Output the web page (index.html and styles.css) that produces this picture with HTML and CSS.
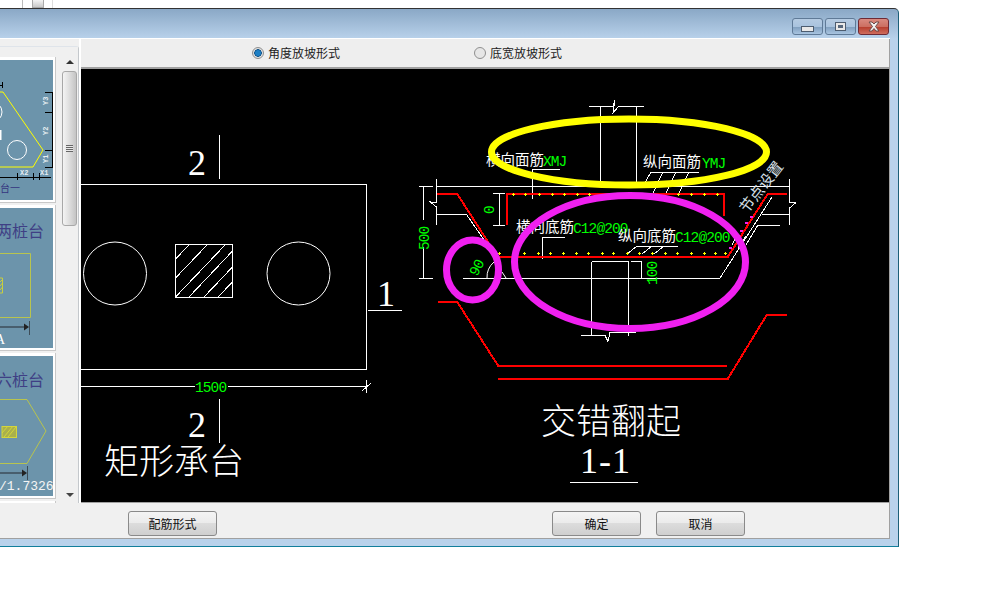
FILE: index.html
```html
<!DOCTYPE html>
<html lang="en">
<head>
  <meta charset="UTF-8" />
  <title>承台配筋</title>
  <link rel="stylesheet" href="styles.css">
</head>
<body>
  <div class="strip">
    <span class="strip-cell"><span class="strip-knob"></span></span>
  </div>

  <div class="window">
    <div class="titlebar">
      <button class="ctl"><span class="ctl-min"></span></button>
      <button class="ctl"><span class="ctl-max"></span></button>
      <button class="ctl ctl-close">
        <svg width="16" height="11" viewBox="0 0 16 11"><path d="M3 1h3l2 2 2-2h3l-3.500 4.500 3.500 4.500h-3l-2-2.500-2 2.500h-3l3.500-4.500z" fill="#f2f2f2" stroke="#6b4a4a" stroke-width="1"/></svg>
      </button>
    </div>

    <div class="upper">
      <div class="side">
        <div class="side-panel">
          <div class="thumbs">
            <div class="card">
              <svg class="thumb" viewBox="0 60 53 140">
                <polyline points="-2,92 3,92 43,150 33,167 -2,167" fill="none" stroke="#ffff00"/>
                <circle cx="17" cy="150" r="9.500" fill="none" stroke="#fff"/>
                <circle cx="-8" cy="112" r="10" fill="none" stroke="#fff"/>
                <rect x="0" y="130" width="1.500" height="10" fill="#fff"/>
                <path d="M45 92.500h7.500M45 112.500h7.500M45 150.500h7.500M45 167.500h7.500M52.500 92v76M0 177.500h51M17.500 173v7M33.500 173v7M39.500 173v7M-2 85.500h4M2.500 82v6" stroke="#000" fill="none"/>
                <text class="tiny" transform="translate(48 105) rotate(-90)">Y3</text>
                <text class="tiny" transform="translate(48 135) rotate(-90)">Y2</text>
                <text class="tiny" transform="translate(48 163) rotate(-90)">Y1</text>
                <text class="tiny" x="20" y="175">X2</text>
                <text class="tiny" x="40" y="175">X1</text>
                <text class="thumb-cap" x="0" y="192">台一</text>
              </svg>
            </div>
            <div class="card">
              <svg class="thumb" viewBox="0 208 53 140">
                <text class="thumb-title" x="44" y="237">两桩台</text>
                <polyline points="-2,253.500 30.500,253.500 30.500,317.500 -2,317.500" fill="none" stroke="#b8c44e"/>
                <path d="M0 278h2.500v15h-2.500M0 282l2-2M0 286l2.500-3M0 290l2.500-3" fill="none" stroke="#c8cf3e"/>
                <path d="M0 327h25" stroke="#3d4d58" stroke-width="1.500"/>
                <path d="M24 323.500l5 3.500-5 3.500z" fill="#222"/>
                <path d="M29.500 321v14" stroke="#3d4d58"/>
                <text class="thumb-a" x="-5" y="344">A</text>
              </svg>
            </div>
            <div class="card">
              <svg class="thumb" viewBox="0 356 53 140">
                <text class="thumb-title" x="44" y="386">六桩台</text>
                <polyline points="-2,399.500 27,399.500 46,431 27,463.500 -2,463.500" fill="none" stroke="#b8c44e"/>
                <rect x="2" y="426.500" width="14.500" height="11" fill="#a9b04c" stroke="#d4d63a"/>
                <path d="M4 437l9-11M8 437l8-10M2 433l6-7" stroke="#d4d63a" fill="none"/>
                <path d="M0 473h23" stroke="#3d4d58" stroke-width="1.500"/>
                <path d="M22 469.500l5 3.500-5 3.500z" fill="#222"/>
                <path d="M27.500 466v14" stroke="#3d4d58"/>
                <text class="thumb-num" x="-1" y="490">/1.7326</text>
              </svg>
            </div>
            <div class="card"></div>
          </div>
          <div class="scrollbar">
            <span class="arrow-up"></span>
            <span class="scroll-thumb"><span class="grip"></span></span>
            <span class="scroll-track"></span>
            <span class="arrow-down"></span>
          </div>
        </div>
      </div>

      <div class="main">
        <div class="modes">
          <label class="mode"><span class="radio radio-on"></span>角度放坡形式</label>
          <label class="mode"><span class="radio"></span>底宽放坡形式</label>
        </div>
        <svg class="canvas" viewBox="81 69 808 433">
          <!-- plan view -->
          <g class="wire">
            <path d="M81 184.500H366.500V369.500H81"/>
            <path d="M219.500 135v44M219.500 399v44M368 310.500h34M81 386.500h114M228 386.500h138M366.500 380v13M362 391l9-8"/>
            <rect x="175.500" y="244.500" width="57" height="53"/>
            <path d="M175.500 259l14-14.500M175.500 278l32-33.500M175.500 297l50-52.500M189 297l43.500-46M204 297l28.500-30M218 297l14.500-15"/>
          </g>
          <g class="round">
            <circle cx="115" cy="273.500" r="31.500"/>
            <circle cx="298.500" cy="273.500" r="31.500"/>
            <path d="M487 278a20 20 0 0 1 7-16M502 272l4 6"/>
          </g>

          <!-- section -->
          <g class="wire">
            <path d="M600.500 106v80M636.500 106v80M589 106h24l2-6 -2 13 6-7h25"/>
            <path d="M436 186.500H790M436.500 179v24l-6 -1 6 5v18M436.500 214.500h30l20 29"/>
            <path d="M789.500 179v23l6 1 -6 5v17M762 214.500h28M758 225.500h22M772 197l-32 50M758 225l-12 20M720 278l20-31"/>
            <path d="M463 278.500H720M591.500 261.500v74M628.500 261.500v74M591.500 261.500h37M581 335.500h24l3 6 2-9h26"/>
            <path d="M423.500 186v34M423.500 247v31M419 186.500h14M419 278.500h14M499.500 193v32M493 193.500h12M493 225.500h12M641.500 261v17M631 261.500h10M631 278.500h10"/>
            <path d="M532.500 199v-30h27M542.500 259v-22h22M699 172h-48l-8 14M663 172l-10 21M676 172l-10 21M689 172l-10 21"/>
            <path d="M678 246h-41l-10 8M664 246l-10 8M652 246l-10 8M737 236l-5 9M746 236l-8 12"/>
          </g>
          <g class="rebar">
            <polyline points="437,193.500 457,193.500 488,242 497,256.500 728,256.500 768,193.500 787,193.500"/>
            <polyline points="506.500,225 506.500,193.500 723.500,193.500 723.500,216"/>
            <polyline points="438,301.500 457,301.500 498,365.500 727,365.500"/>
            <polyline points="498,378.500 728,378.500 767,314.500 787,314.500"/>
          </g>
          <path class="dots" d="M512 194.500h3m-1.500-1.500v3M524 194.500h3m-1.500-1.500v3M538 194.500h3m-1.500-1.500v3M551 194.500h3m-1.500-1.500v3M563 194.500h3m-1.500-1.500v3M576 194.500h3m-1.500-1.500v3M588 194.500h3m-1.500-1.500v3M677 194.500h3m-1.500-1.500v3M690 194.500h3m-1.500-1.500v3M703 194.500h3m-1.500-1.500v3M716 194.500h3m-1.500-1.500v3M498 253.500h3m-1.500-1.500v3M523 253.500h3m-1.500-1.500v3M537 253.500h3m-1.500-1.500v3M549 253.500h3m-1.500-1.500v3M562 253.500h3m-1.500-1.500v3M575 253.500h3m-1.500-1.500v3M587 253.500h3m-1.500-1.500v3M601 253.500h3m-1.500-1.500v3M612 253.500h3m-1.500-1.500v3M626 253.500h3m-1.500-1.500v3M638 253.500h3m-1.500-1.500v3M651 253.500h3m-1.500-1.500v3M664 253.500h3m-1.500-1.500v3M676 253.500h3m-1.500-1.500v3M690 253.500h3m-1.500-1.500v3M703 253.500h3m-1.500-1.500v3M714 253.500h3m-1.500-1.500v3M724 253.500h3m-1.500-1.500v3"/>
          <path class="pink-dots" d="M750 217h3M745 223h3M740 231h3M729 248h3"/>

          <!-- drawing text -->
          <text class="big-num" x="188" y="175">2</text>
          <text class="big-num" x="188" y="437">2</text>
          <text class="big-num" x="377" y="306">1</text>
          <text class="big-cjk" x="104" y="474">矩形承台</text>
          <text class="big-cjk" x="541" y="434">交错翻起</text>
          <text class="big-num big-num-wide" x="580" y="473">1-1</text>
          <path class="wire" d="M570 482.500h68"/>

          <text class="dim" x="195" y="392">1500</text>
          <text class="dim" transform="translate(429 250) rotate(-90)">500</text>
          <text class="dim" transform="translate(494 214) rotate(-90)">0</text>
          <text class="dim" transform="translate(657 285) rotate(-90)">100</text>
          <text class="dim" transform="translate(477 277) rotate(-62)">90</text>

          <text class="note" x="486" y="165">横向面筋</text>
          <text class="dim" x="543" y="166">XMJ</text>
          <text class="note" x="643" y="167">纵向面筋</text>
          <text class="dim" x="702" y="168">YMJ</text>
          <text class="note" x="516" y="232">横向底筋</text>
          <text class="dim" x="573" y="233">C12@200</text>
          <text class="note" x="618" y="241">纵向底筋</text>
          <text class="dim" x="675" y="242">C12@200</text>
          <text class="note note-pale" transform="translate(747 214) rotate(-52)">节点设置</text>

          <!-- marker ellipses -->
          <ellipse class="mark-yellow" cx="629" cy="152" rx="137.500" ry="33"/>
          <ellipse class="mark-pink" cx="630" cy="262" rx="115.500" ry="66.500"/>
          <ellipse class="mark-pink" cx="472.500" cy="270" rx="26" ry="30"/>
        </svg>
      </div>
    </div>

    <div class="footer">
      <button class="btn btn-form">配筋形式</button>
      <button class="btn">确定</button>
      <button class="btn">取消</button>
    </div>
  </div>
</body>
</html>
```

FILE: styles.css
```css
html, body {
  margin: 0;
  height: 100%;
  background: #fff;
  overflow: hidden;
}
body {
  font-family: "Noto Sans CJK SC", "Liberation Sans", sans-serif;
  font-size: 12px;
  color: #111;
}

.strip {
  height: 8px;
  padding-left: 22px;
}
.strip-cell {
  display: block;
  width: 31px;
  height: 8px;
  box-sizing: border-box;
  border-left: 1px solid #bbb;
  border-right: 1px solid #ddd;
  padding-left: 9px;
}
.strip-knob {
  display: block;
  width: 12px;
  height: 8px;
  box-sizing: border-box;
  background: linear-gradient(#f4f4f4, #c9c9c9);
  border: 1px solid #aaa;
  border-top: 0;
}

.window {
  width: 899px;
  height: 539px;
  box-sizing: border-box;
  padding-right: 8px;
  background: linear-gradient(#8aa8c6, #b9d2eb 30px);
  border-top: 1px solid #333;
  border-right: 1px solid #1c5f78;
  border-bottom: 1px solid #127f9b;
  border-top-right-radius: 5px;
  display: flex;
  flex-direction: column;
}

.titlebar {
  height: 29px;
  box-sizing: border-box;
  padding: 9px 1px 0 0;
  display: flex;
  justify-content: flex-end;
  gap: 2px;
}
.ctl {
  width: 31px;
  height: 17px;
  padding: 0;
  border: 1px solid #5f7a97;
  border-radius: 3px;
  background: linear-gradient(#b5cbe2, #a9c3de 50%, #7f9ebe 52%, #a8c4e0);
  display: flex;
  align-items: center;
  justify-content: center;
}
.ctl-min {
  width: 11px;
  height: 4px;
  margin-top: 5px;
  background: #e8e8e8;
  border: 1px solid #4d5d70;
}
.ctl-max {
  width: 9px;
  height: 7px;
  background: #e8e8e8;
  border: 1px solid #4d5d70;
  box-shadow: inset 0 0 0 2px #e8e8e8, inset 0 0 0 6px #56677c;
}
.ctl-close {
  border-color: #6e2a35;
  background: linear-gradient(#d98a80, #cc6f62 50%, #b63c2c 52%, #cf6d5e);
}

.upper {
  display: flex;
  height: 465px;
  border-top: 1px solid #fff;
  box-sizing: border-box;
}
.side {
  width: 81px;
  flex: none;
  box-sizing: border-box;
  background: #f0f0f0;
  border-right: 2px solid #fff;
  padding-top: 7px;
  overflow: hidden;
}
.side-panel {
  height: 100%;
  box-sizing: content-box;
  display: flex;
  border-top: 1px solid #dfe4ea;
  border-right: 1px solid #c4c8cc;
  border-top-right-radius: 3px;
}
.thumbs {
  width: 56px;
  flex: none;
  padding-top: 10px;
  overflow: hidden;
}
.card {
  height: 140px;
  width: 53px;
  padding: 3px 2px 2px 0;
  margin-bottom: 2px;
  background: #fff;
  border-right: 1px solid #c8c8c8;
  border-bottom: 1px solid #c8c8c8;
}
.thumb {
  display: block;
  width: 53px;
  height: 140px;
  background: #6c94ab;
}

.tiny {
  font-family: "Liberation Mono", monospace;
  font-size: 7px;
  font-weight: bold;
  fill: #e6eef2;
}
.thumb-cap {
  font-size: 10px;
  fill: #35357f;
}
.thumb-title {
  font-size: 16px;
  fill: #3f3f85;
  text-anchor: end;
}
.thumb-a {
  font-family: "Liberation Serif", serif;
  font-size: 14px;
  fill: #fff;
}
.thumb-num {
  font-family: "Liberation Mono", monospace;
  font-size: 13px;
  fill: #f4f4f4;
}

.scrollbar {
  width: 17px;
  margin-left: 5px;
  flex: none;
  display: flex;
  flex-direction: column;
  align-items: center;
  padding: 13px 0 7px;
  box-sizing: border-box;
  background: #f0f0f0;
}
.arrow-up {
  width: 0;
  height: 0;
  border: 4px solid transparent;
  border-top: 0;
  border-bottom: 4px solid #333;
  margin-bottom: 7px;
}
.arrow-down {
  width: 0;
  height: 0;
  border: 4px solid transparent;
  border-bottom: 0;
  border-top: 4px solid #444;
}
.scroll-thumb {
  width: 15px;
  height: 155px;
  box-sizing: border-box;
  border: 1px solid #a8a8a8;
  border-radius: 3px;
  background: linear-gradient(90deg, #f4f4f4, #e2e2e2 40%, #c4c4c4);
  display: flex;
  align-items: center;
  justify-content: center;
}
.grip {
  width: 7px;
  height: 7px;
  background: repeating-linear-gradient(#666 0 1px, #e8e8e8 1px 2px);
}
.scroll-track {
  flex: 1;
}

.main {
  width: 809px;
  flex: none;
  box-sizing: border-box;
  display: flex;
  flex-direction: column;
  border-right: 1px solid #a0a0a0;
  border-bottom: 1px solid #a0a0a0;
}
.modes {
  height: 30px;
  flex: none;
  box-sizing: border-box;
  background: #eee;
  border-bottom: 2px solid #a0a0a0;
  padding-left: 171px;
  display: flex;
  align-items: center;
}
.mode {
  display: flex;
  align-items: center;
  gap: 4px;
  line-height: 14px;
  width: 222px;
  color: #222;
}
.radio {
  width: 10px;
  height: 10px;
  flex: none;
  border-radius: 50%;
  border: 1px solid #8f8f8f;
  background: #e6e6e6;
}
.radio-on {
  background: radial-gradient(circle, #1d7fc4 0 2.500px, #0b4f86 3.500px, #e0e0e0 4px);
}

.canvas {
  display: block;
  width: 808px;
  height: 433px;
  flex: none;
  background: #000;
}
.wire {
  fill: none;
  stroke: #fff;
  shape-rendering: crispEdges;
}
.round {
  fill: none;
  stroke: #fff;
}
.rebar {
  fill: none;
  stroke: #f00;
  stroke-width: 2;
  shape-rendering: crispEdges;
}
.dots {
  fill: none;
  stroke: #ff0;
  shape-rendering: crispEdges;
}
.pink-dots {
  stroke: #f020f0;
  stroke-width: 2;
  shape-rendering: crispEdges;
}

.big-num {
  font-family: "Liberation Serif", serif;
  font-size: 36px;
  fill: #fff;
}
.big-num-wide {
  letter-spacing: 1px;
}
.big-cjk {
  font-size: 35px;
  font-weight: 300;
  fill: #fff;
}
.dim {
  font-family: "Liberation Mono", monospace;
  font-size: 14.500px;
  letter-spacing: -0.900px;
  fill: #00ff00;
}
.note {
  font-size: 14.500px;
  fill: #fff;
}
.note-pale {
  font-size: 15px;
  fill: #d8e0ea;
}
.mark-yellow {
  fill: none;
  stroke: #ffff00;
  stroke-width: 7;
}
.mark-pink {
  fill: none;
  stroke: #f020f0;
  stroke-width: 7;
}

.footer {
  height: 36px;
  flex: none;
  box-sizing: border-box;
  background: #f0f0f0;
  border-bottom: 1px solid #a0a0a0;
  border-right: 1px solid #a0a0a0;
  padding: 8px 0 0 128px;
  display: flex;
  gap: 15px;
}
.btn {
  width: 89px;
  height: 25px;
  padding: 0;
  border: 1px solid #8a8a8a;
  border-radius: 3px;
  background: linear-gradient(#f4f4f4, #ebebeb 48%, #dcdcdc 50%, #cfcfcf);
  font: inherit;
  color: #111;
}
.btn-form {
  margin-right: 320px;
}
```
